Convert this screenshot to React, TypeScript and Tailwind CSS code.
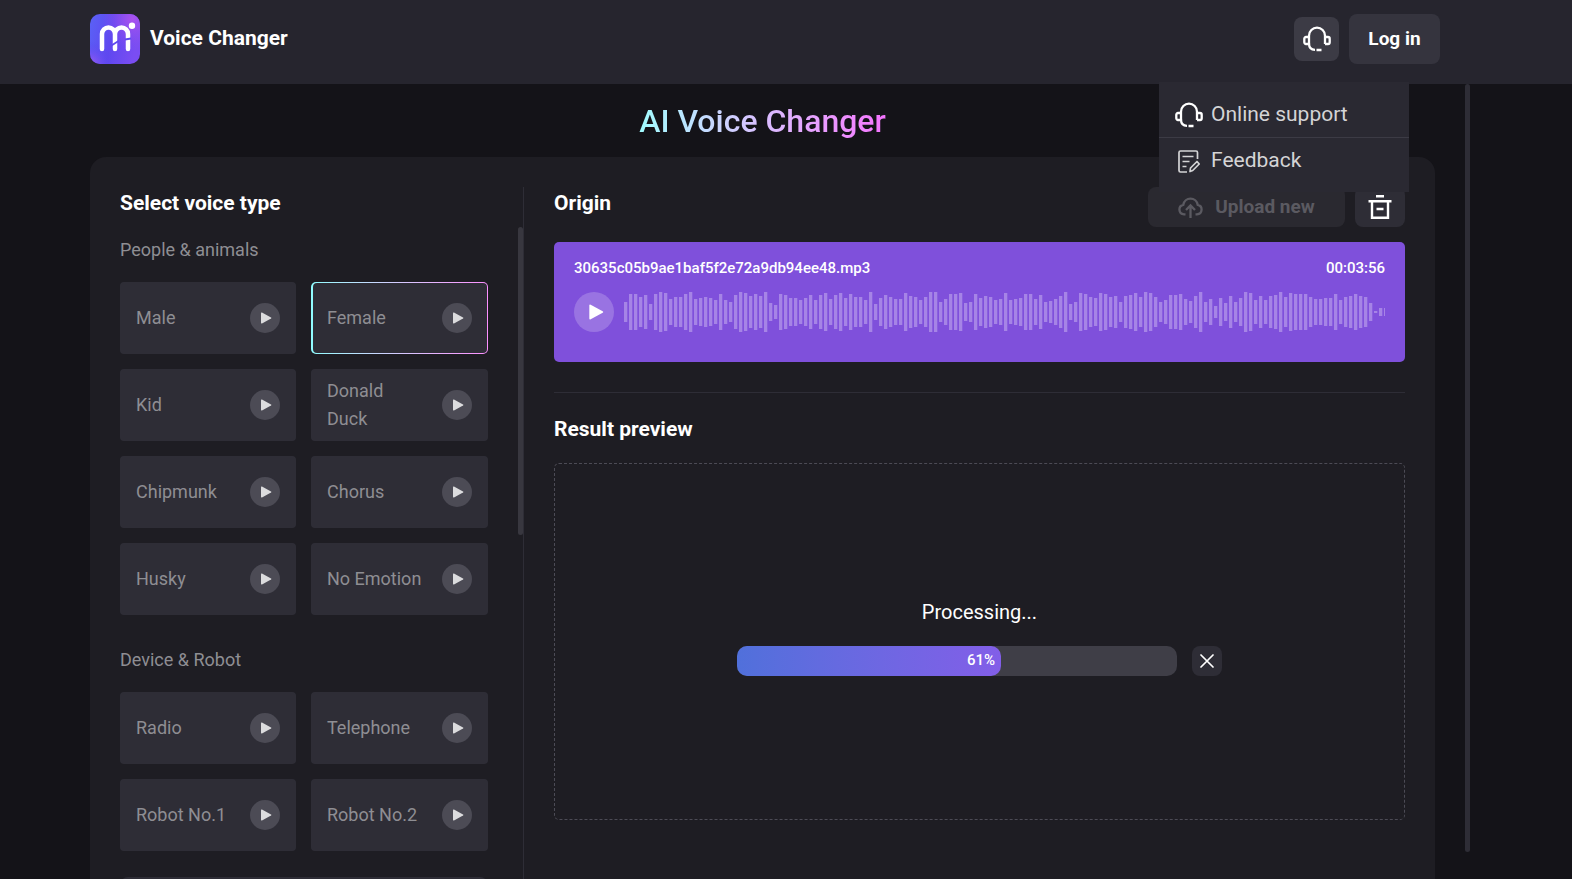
import { useState } from 'react'
import clsx from 'clsx'

interface Voice {
  name: string
}

interface VoiceGroup {
  title: string
  voices: Voice[]
}

const GROUPS: VoiceGroup[] = [
  {
    title: 'People & animals',
    voices: [
      { name: 'Male' },
      { name: 'Female' },
      { name: 'Kid' },
      { name: 'Donald Duck' },
      { name: 'Chipmunk' },
      { name: 'Chorus' },
      { name: 'Husky' },
      { name: 'No Emotion' },
    ],
  },
  {
    title: 'Device & Robot',
    voices: [{ name: 'Radio' }, { name: 'Telephone' }, { name: 'Robot No.1' }, { name: 'Robot No.2' }],
  },
]

// half height of each bar, in px
const PEAKS = [
  10, 18, 18, 15, 17, 8, 18, 20, 19, 13, 15, 15, 18, 20, 13, 14, 15, 14, 12, 18, 12, 10, 17, 20, 19, 16, 18, 16, 20, 9,
  7, 18, 17, 14, 14, 12, 14, 17, 12, 17, 19, 13, 17, 19, 14, 18, 15, 15, 12, 20, 8, 14, 17, 15, 13, 13, 19, 16, 15, 12,
  15, 20, 20, 10, 13, 18, 18, 19, 9, 10, 18, 14, 16, 15, 12, 13, 19, 12, 13, 14, 18, 18, 13, 17, 10, 11, 13, 16, 20, 8,
  10, 19, 18, 15, 14, 19, 18, 15, 16, 10, 16, 17, 19, 15, 20, 19, 15, 10, 12, 17, 17, 18, 13, 11, 16, 20, 10, 13, 6, 14,
  9, 16, 10, 14, 20, 19, 12, 16, 12, 16, 17, 20, 15, 19, 18, 18, 18, 15, 13, 13, 14, 14, 18, 12, 15, 16, 18, 16, 15, 9,
  1, 4, 4,
]

function Logo() {
  return (
    <svg width="50" height="50" viewBox="0 0 50 50" fill="none" aria-hidden="true">
      <defs>
        <linearGradient id="logo-bg" x1="0" y1="0" x2="1" y2="0.2">
          <stop offset="0" stopColor="#5a62f6" />
          <stop offset="0.5" stopColor="#5f48f0" />
          <stop offset="1" stopColor="#7a4df2" />
        </linearGradient>
        <radialGradient id="logo-top" cx="0.85" cy="0.1" r="0.6">
          <stop offset="0" stopColor="#ab52ee" />
          <stop offset="1" stopColor="#8a50f0" stopOpacity="0" />
        </radialGradient>
        <radialGradient id="logo-glow" cx="0" cy="1" r="0.45">
          <stop offset="0" stopColor="#a05cf5" />
          <stop offset="1" stopColor="#5040ee" stopOpacity="0" />
        </radialGradient>
      </defs>
      <rect width="50" height="50" rx="10" fill="url(#logo-bg)" />
      <rect width="50" height="50" rx="10" fill="url(#logo-top)" />
      <rect width="50" height="50" rx="10" fill="url(#logo-glow)" />
      <path
        d="M12 35V20a6.500 6.500 0 0 1 13 0V35M25 20a6.500 6.500 0 0 1 13 0V35"
        stroke="#fff"
        strokeWidth="4.500"
        strokeLinecap="round"
      />
      <path d="M21.500 31.500l7-4.500M35 25.500l6-1" stroke="#5f48f0" strokeWidth="1.800" />
      <circle cx="42" cy="11.700" r="3.200" fill="#fff" />
    </svg>
  )
}

function HeadsetIcon() {
  return (
    <svg width="28" height="26" viewBox="0 0 28 26" fill="none" stroke="#fff" strokeWidth="2.300" aria-hidden="true">
      <path d="M6 18V9.700a8 8 0 0 1 16 0V18" />
      <path d="M6 11H3a1.700 1.700 0 0 0-1.700 1.700v3.600A1.700 1.700 0 0 0 3 18h3M22 11h3a1.700 1.700 0 0 1 1.700 1.700v3.600A1.700 1.700 0 0 1 25 18h-3" />
      <path d="M6 17.500c0 4 2 6.300 6 6.300M13.500 24h5" />
    </svg>
  )
}

function FeedbackIcon() {
  return (
    <svg width="22" height="23" viewBox="0 0 22 23" fill="none" stroke="#d4d4d6" strokeWidth="1.700" aria-hidden="true">
      <path d="M19.500 9V2.500A1.500 1.500 0 0 0 18 1H2.500A1.500 1.500 0 0 0 1 2.500v18A1.500 1.500 0 0 0 2.500 22H9" />
      <path d="M4.500 6.500h11M4.500 11.500h7M4.500 16.500h4" />
      <path d="M12 21.500l.5-3.500 6.500-6.500 2.200 2.500-6.500 6.500z" strokeLinejoin="round" />
    </svg>
  )
}

function UploadIcon() {
  return (
    <svg width="25" height="22" viewBox="0 0 25 22" fill="none" stroke="currentColor" strokeWidth="2.300" aria-hidden="true">
      <path d="M7.500 18.300H6a4.800 4.800 0 0 1-.7-9.500 7.300 7.300 0 0 1 14.400 0 4.800 4.800 0 0 1-.7 9.500h-1.500" />
      <path d="M12.500 22V9.500M8 14l4.500-4.500L17 14" />
    </svg>
  )
}

function TrashIcon() {
  return (
    <svg width="24" height="24" viewBox="0 0 24 24" fill="none" stroke="#fff" strokeWidth="2.400" aria-hidden="true">
      <path d="M8 1.200h8M.5 6.200h23M4 6.200v16.500h16V6.200M8.500 14h7" />
    </svg>
  )
}

function PlayIcon({ size }: { size: number }) {
  return (
    <svg width={size} height={size} viewBox="0 0 12 12" fill="currentColor" aria-hidden="true">
      <path d="M1 1.200v9.600a.7.7 0 0 0 1 .6l9-4.800a.7.7 0 0 0 0-1.200L2 .6a.7.7 0 0 0-1 .6z" />
    </svg>
  )
}

function Header() {
  return (
    <header className="flex items-center justify-between bg-[#26252e] pt-3.5 pr-[132px] pb-5 pl-[90px]">
      <a href="#" className="flex items-center gap-2.5 text-[21px] font-bold text-white">
        <Logo />
        Voice Changer
      </a>
      <div className="flex items-center gap-2.5">
        <div className="relative">
          <button aria-label="Support" className="flex h-11 w-[45px] items-center justify-center rounded-lg bg-[#3c3b45]">
            <HeadsetIcon />
          </button>
          <nav className="absolute top-[65px] -right-[70px] z-10 w-[250px] bg-[#2a2932] pt-2.5 pb-2 text-[21px] text-[#d4d4d6]">
            <a href="#" className="flex h-[46px] items-center gap-2 border-b border-[#3c3b45] pl-4">
              <HeadsetIcon />
              Online support
            </a>
            <a href="#" className="flex h-[46px] items-center gap-2 pl-4">
              <span className="flex w-7 justify-center">
                <FeedbackIcon />
              </span>
              Feedback
            </a>
          </nav>
        </div>
        <button className="h-[50px] w-[91px] rounded-lg bg-[#35343e] text-[19px] font-bold text-white">Log in</button>
      </div>
    </header>
  )
}

interface VoiceCardProps {
  voice: Voice
  selected: boolean
  onSelect: () => void
}

function VoiceCard({ voice, selected, onSelect }: VoiceCardProps) {
  return (
    <button
      onClick={onSelect}
      aria-pressed={selected}
      className={clsx(
        'h-[72px] rounded-[5px] text-left',
        selected ? 'bg-linear-to-r from-[#8ffcff] to-[#fc8fff] py-px pr-px pl-0.5' : 'bg-[#2e2d36]',
      )}
    >
      <span
        className={clsx(
          'flex h-full items-center justify-between gap-[18px] rounded-[4px] bg-[#2e2d36] text-lg leading-7 text-[#8e8e93]',
          selected ? 'pr-[15px] pl-3.5' : 'px-4',
        )}
      >
        {voice.name}
        <span className="flex size-[30px] shrink-0 items-center justify-center rounded-full bg-[#4c4b55] pl-0.5 text-[#dcdcde]">
          <PlayIcon size={12} />
        </span>
      </span>
    </button>
  )
}

function VoicePanel() {
  const [selected, setSelected] = useState('Female')

  return (
    <section className="flex w-[404px] shrink-0 border-r border-[#2e2d36]">
      <div className="w-[368px]">
        <h2 className="text-[21px] leading-8 font-bold text-white">Select voice type</h2>
        {GROUPS.map((group) => (
          <div key={group.title} className="mb-3.5">
            <h3 className="pt-[17px] pb-[18px] text-lg leading-7 text-[#8e8e93]">{group.title}</h3>
            <div className="grid grid-cols-[176px_1fr] gap-[15px]">
              {group.voices.map((voice) => (
                <VoiceCard
                  key={voice.name}
                  voice={voice}
                  selected={voice.name === selected}
                  onSelect={() => setSelected(voice.name)}
                />
              ))}
            </div>
          </div>
        ))}
        <button aria-label="Convert" className="mt-3 h-[50px] w-full rounded-lg bg-[#2e2d36]" />
      </div>
      {/* scroll thumb */}
      <div className="mt-10 ml-auto h-[308px] w-[5px] rounded-full bg-[#38373f]" />
    </section>
  )
}

function Waveform() {
  return (
    <svg className="h-10 min-w-0 flex-1" fill="#a684e6" aria-hidden="true">
      {PEAKS.map((peak, i) => (
        <rect key={i} x={i * 5} y={20 - peak} width="3.300" height={peak * 2} />
      ))}
    </svg>
  )
}

function Origin() {
  return (
    <>
      <div className="flex justify-between">
        <h2 className="text-[21px] leading-8 font-bold text-white">Origin</h2>
        <div className="flex gap-2.5">
          <button
            disabled
            className="flex h-10 w-[197px] items-center justify-center gap-3 rounded-lg bg-[#2a2930] text-[19px] font-bold text-[#5b5a61]"
          >
            <UploadIcon />
            Upload new
          </button>
          <button aria-label="Delete" className="flex h-10 w-[50px] items-center justify-center rounded-lg bg-[#2e2d36]">
            <TrashIcon />
          </button>
        </div>
      </div>
      <div className="mt-[15px] h-[120px] rounded-[5px] bg-[#7f50db] px-5 pt-3.5 text-white">
        <div className="flex justify-between text-[15px] leading-6 font-medium">
          <span>30635c05b9ae1baf5f2e72a9db94ee48.mp3</span>
          <span>00:03:56</span>
        </div>
        <div className="mt-3 flex gap-2.5">
          <button
            aria-label="Play"
            className="flex size-10 shrink-0 items-center justify-center rounded-full bg-[#9973e2] pl-1"
          >
            <PlayIcon size={16} />
          </button>
          <Waveform />
        </div>
      </div>
    </>
  )
}

function Result({ progress }: { progress: number }) {
  return (
    <>
      <h2 className="mt-5 text-[21px] leading-8 font-bold text-white">Result preview</h2>
      <div className="mt-[18px] flex h-[357px] flex-col items-center justify-center gap-5 rounded-[5px] border border-dashed border-[#4c4b55] pb-2.5">
        <p className="text-xl leading-7 text-white">Processing...</p>
        <div className="flex gap-[15px]">
          <div className="w-[440px] rounded-[10px] bg-[#3f3e47]">
            <div className="flex h-[30px] w-[60%] items-center justify-end rounded-[10px] bg-linear-to-r from-[#5070db] to-[#825ee8] pr-1.5 text-[15px] font-medium text-white">
              {progress}%
            </div>
          </div>
          <button aria-label="Cancel" className="flex size-[30px] items-center justify-center rounded-lg bg-[#2e2d36]">
            <svg width="14" height="14" viewBox="0 0 14 14" stroke="#fff" strokeWidth="1.700" strokeLinecap="round">
              <path d="M1 1l12 12M13 1L1 13" />
            </svg>
          </button>
        </div>
      </div>
    </>
  )
}

export default function App() {
  return (
    <div className="flex h-screen flex-col overflow-hidden bg-[#141318] font-['Roboto',sans-serif]">
      <Header />
      <div className="flex min-h-0 flex-1 pr-[102px] pl-[90px]">
        <main className="flex min-w-0 flex-1 flex-col">
          <h1 className="mx-auto bg-linear-to-r from-[#a0fcff] to-[#f573ff] bg-clip-text pt-[17px] pb-4 text-[32px] leading-10 font-medium text-transparent">
            AI Voice Changer
          </h1>
          <div className="flex min-h-0 flex-1 rounded-t-2xl bg-[#1e1d23] px-[30px] pt-[30px]">
            <VoicePanel />
            <section className="min-w-0 flex-1 pl-[30px]">
              <Origin />
              <hr className="mt-[30px] border-[#2e2d36]" />
              <Result progress={61} />
            </section>
          </div>
        </main>
        {/* page scroll thumb */}
        <div className="mb-[27px] ml-[30px] w-[5px] rounded-full bg-[#2e2d36]" />
      </div>
    </div>
  )
}
